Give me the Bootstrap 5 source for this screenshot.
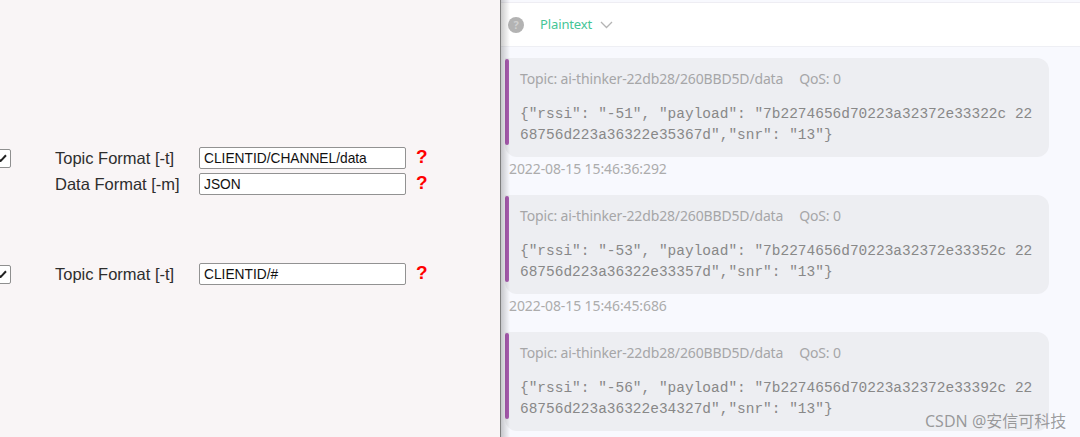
<!DOCTYPE html>
<html lang="zh">
<head>
<meta charset="utf-8">
<title>MQTT</title>
<link href="https://cdn.jsdelivr.net/npm/bootstrap@5.3.0/dist/css/bootstrap.min.css" rel="stylesheet">
<style>
html,body{height:437px;overflow:hidden;margin:0}
body{background:#f9f5f6;font-family:"Liberation Sans",Arial,sans-serif;color:#333}
.shell{height:437px;position:relative;overflow:hidden}
.cfg-pane{width:500px;flex:none;padding-top:147px;background:#f9f5f6}
.cfg-row{height:22px;margin-bottom:4px}
.cfg-row.gap-after{margin-bottom:68px}
.tick{width:18px;height:19px;margin-left:-7px;margin-right:44px;flex:none;background:#fff;border:1px solid #8f8f8f;border-radius:2px;display:flex;align-items:center;justify-content:center;visibility:hidden}
.tick.on{visibility:visible}
.cfg-label{width:144px;flex:none;font-size:16.5px;color:#2e2e2e;line-height:22px}
.cfg-input{width:207px;height:22px;flex:none;font:13.75px "Liberation Sans",Arial,sans-serif;color:#111;padding:0 4px;border:1px solid #929292;border-radius:2px;background:#fff;outline:0}
.qmark{margin-left:10px;color:#f00;font-weight:700;font-size:19px;line-height:20px;margin-top:-2px}
.msg-pane{flex:1;min-width:0;position:relative;background:#f8f9fe;border-left:1px solid #7e7e7e}
.msg-pane::after{content:"";position:absolute;left:0;top:0;bottom:0;width:9px;background:linear-gradient(to right,rgba(0,0,0,.2),rgba(0,0,0,0));pointer-events:none}
.msg-head{height:45px;margin-top:2px;background:#fff;border-bottom:1px solid #eeeff4;border-top:1px solid #eeedf3;padding-left:7px;font-family:"Noto Sans",sans-serif}
.help-dot{width:16px;height:16px;border-radius:50%;background:#b3b3b3;color:#d0d0d0;font-size:11px;font-weight:700;line-height:16px;text-align:center}
.fmt{margin-left:16px;font-size:13px;letter-spacing:-.12px;color:#45c596}
.msg-list{padding:11px 0 0 4px}
.msg-item{margin-bottom:16px}
.bubble{position:relative;width:544px;height:99px;background:#edeef2;border-radius:0 12px 12px 12px;padding:10px 0 0 15px;color:#a6a6a8}
.bubble::before{content:"";position:absolute;left:0;top:1px;width:4px;height:86px;background:#a95bb0;border-radius:2px}
.bubble-head{font:14px/21px "Noto Sans",sans-serif;letter-spacing:-.15px;margin-bottom:14.5px;white-space:nowrap}
.bubble-head span{margin-left:16px}
.bubble-body{font:14.47px/21px "Liberation Mono",monospace;color:#888;white-space:pre}
.stamp{font:14px/20px "Noto Sans",sans-serif;letter-spacing:-.1px;color:#acacac;margin:2px 0 0 4px}
.wmark{position:absolute;left:925px;top:411px;font:16px/20px "Noto Sans","Noto Sans CJK SC",sans-serif;color:rgba(95,95,95,.6);white-space:nowrap}
</style>
</head>
<body>
<div class="shell d-flex">
  <section class="cfg-pane">
    <div class="cfg-row d-flex align-items-center">
      <span class="tick on"><svg width="10" height="8" viewBox="0 0 10 8"><path d="M1 4.5 3.6 7 9 1.2" fill="none" stroke="#222" stroke-width="2"/></svg></span>
      <span class="cfg-label">Topic Format [-t]</span>
      <input class="cfg-input" value="CLIENTID/CHANNEL/data">
      <span class="qmark">?</span>
    </div>
    <div class="cfg-row gap-after d-flex align-items-center">
      <span class="tick"></span>
      <span class="cfg-label">Data Format [-m]</span>
      <input class="cfg-input" value="JSON">
      <span class="qmark">?</span>
    </div>
    <div class="cfg-row d-flex align-items-center">
      <span class="tick on"><svg width="10" height="8" viewBox="0 0 10 8"><path d="M1 4.5 3.6 7 9 1.2" fill="none" stroke="#222" stroke-width="2"/></svg></span>
      <span class="cfg-label">Topic Format [-t]</span>
      <input class="cfg-input" value="CLIENTID/#">
      <span class="qmark">?</span>
    </div>
  </section>
  <section class="msg-pane">
    <div class="msg-head d-flex align-items-center">
      <span class="help-dot">?</span>
      <span class="fmt">Plaintext</span>
      <svg class="ms-2" width="13" height="8" viewBox="0 0 13 8"><path d="M1 1 6.5 6.5 12 1" fill="none" stroke="#b4b4b4" stroke-width="1.3"/></svg>
    </div>
    <div class="msg-list">
      <div class="msg-item">
        <div class="bubble">
          <div class="bubble-head">Topic: ai-thinker-22db28/260BBD5D/data<span>QoS: 0</span></div>
          <div class="bubble-body">{"rssi": "-51", "payload": "7b2274656d70223a32372e33322c 22
68756d223a36322e35367d","snr": "13"}</div>
        </div>
        <div class="stamp">2022-08-15 15:46:36:292</div>
      </div>
      <div class="msg-item">
        <div class="bubble">
          <div class="bubble-head">Topic: ai-thinker-22db28/260BBD5D/data<span>QoS: 0</span></div>
          <div class="bubble-body">{"rssi": "-53", "payload": "7b2274656d70223a32372e33352c 22
68756d223a36322e33357d","snr": "13"}</div>
        </div>
        <div class="stamp">2022-08-15 15:46:45:686</div>
      </div>
      <div class="msg-item">
        <div class="bubble">
          <div class="bubble-head">Topic: ai-thinker-22db28/260BBD5D/data<span>QoS: 0</span></div>
          <div class="bubble-body">{"rssi": "-56", "payload": "7b2274656d70223a32372e33392c 22
68756d223a36322e34327d","snr": "13"}</div>
        </div>
        <div class="stamp">2022-08-15 15:46:55:369</div>
      </div>
    </div>
  </section>
  <div class="wmark">CSDN @安信可科技</div>
</div>
<script src="https://cdn.jsdelivr.net/npm/bootstrap@5.3.0/dist/js/bootstrap.bundle.min.js"></script>
</body>
</html>
